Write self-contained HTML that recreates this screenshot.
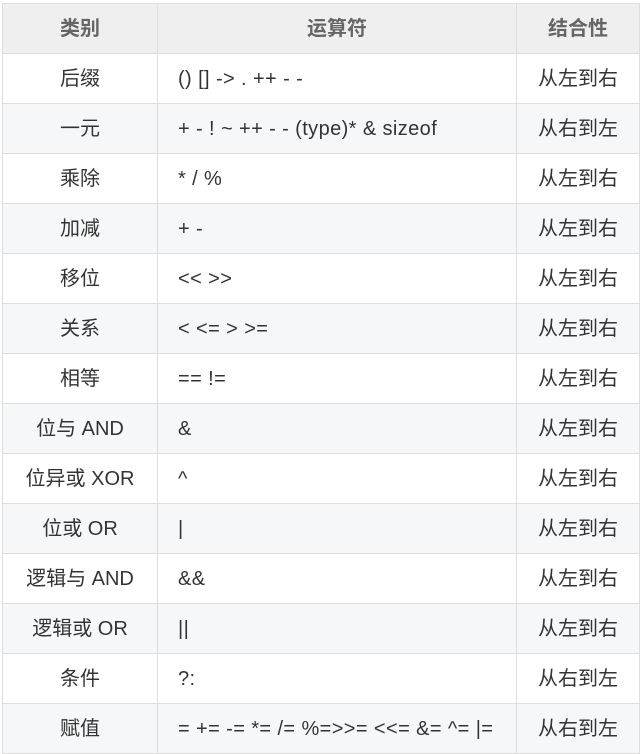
<!DOCTYPE html><html><head><meta charset="utf-8"><style>
body{margin:0;background:#fff;}
table{position:absolute;left:2px;top:3px;border-collapse:collapse;width:637px;font-family:"Liberation Sans","Noto Sans CJK SC",sans-serif;font-size:20px;line-height:24px;color:#333;table-layout:fixed}
tr{height:50px}
td,th{border:1px solid #ddd;height:49px;padding:0 0 0 20px;text-align:left;vertical-align:middle}
td:nth-child(2){letter-spacing:0.4px}
th{background:#efefef;color:#666;font-weight:bold;text-align:center;padding:0}
td:first-child,td:last-child{text-align:center;padding:0}
tr:nth-child(odd) td{background:#f6f7f8}
</style></head><body><table>
<colgroup><col style="width:155px"><col style="width:359px"><col style="width:123px"></colgroup>
<tr><th>类别</th><th>运算符</th><th>结合性</th></tr>
<tr><td>后缀</td><td>() [] -&gt; . ++ - -</td><td>从左到右</td></tr>
<tr><td>一元</td><td>+ - ! ~ ++ - - (type)* &amp; sizeof</td><td>从右到左</td></tr>
<tr><td>乘除</td><td>* / %</td><td>从左到右</td></tr>
<tr><td>加减</td><td>+ -</td><td>从左到右</td></tr>
<tr><td>移位</td><td>&lt;&lt; &gt;&gt;</td><td>从左到右</td></tr>
<tr><td>关系</td><td>&lt; &lt;= &gt; &gt;=</td><td>从左到右</td></tr>
<tr><td>相等</td><td>== !=</td><td>从左到右</td></tr>
<tr><td>位与 AND</td><td>&amp;</td><td>从左到右</td></tr>
<tr><td>位异或 XOR</td><td>^</td><td>从左到右</td></tr>
<tr><td>位或 OR</td><td>|</td><td>从左到右</td></tr>
<tr><td>逻辑与 AND</td><td>&amp;&amp;</td><td>从左到右</td></tr>
<tr><td>逻辑或 OR</td><td>||</td><td>从左到右</td></tr>
<tr><td>条件</td><td>?:</td><td>从右到左</td></tr>
<tr><td>赋值</td><td>= += -= *= /= %=&gt;&gt;= &lt;&lt;= &amp;= ^= |=</td><td>从右到左</td></tr>
</table></body></html>
